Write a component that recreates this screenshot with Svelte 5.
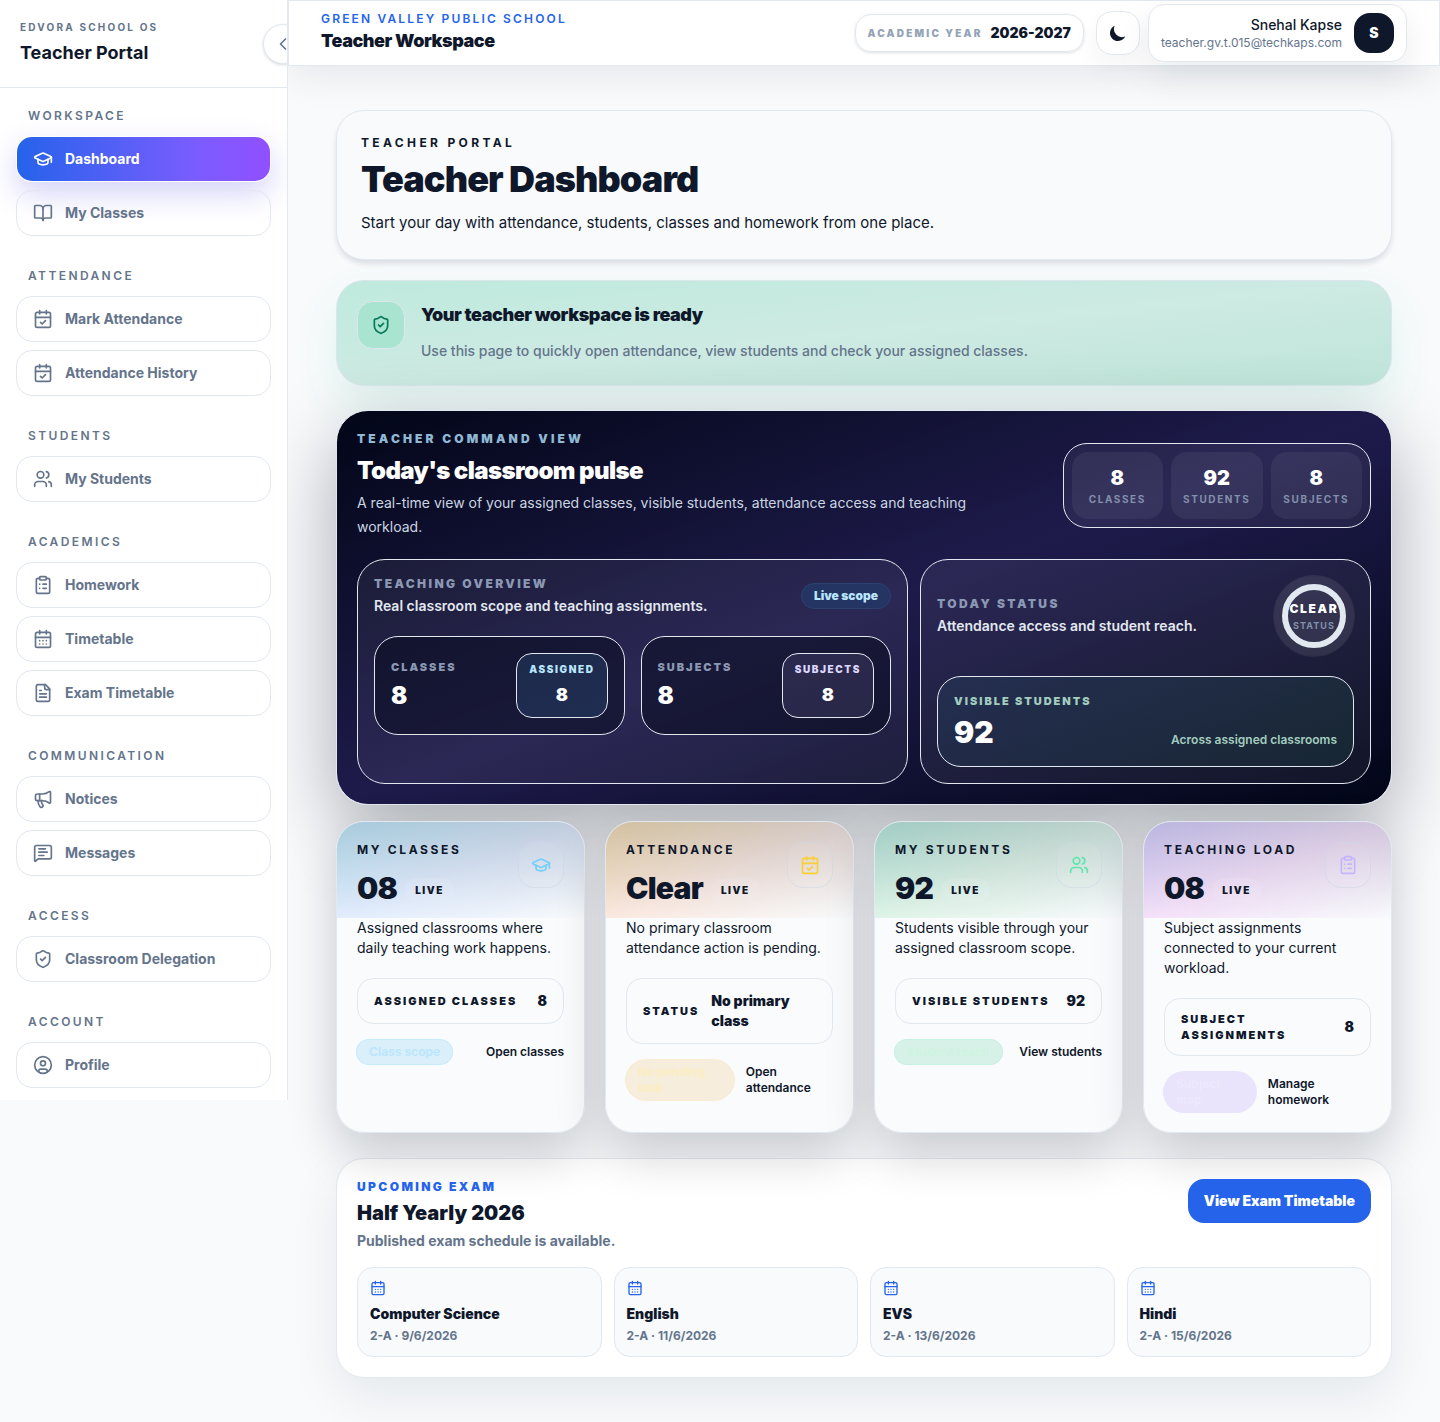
<script>
  let darkMode = false;

  const nav = [
    {
      title: 'WORKSPACE',
      items: [
        { label: 'Dashboard', icon: 'cap', active: true },
        { label: 'My Classes', icon: 'book' }
      ]
    },
    {
      title: 'ATTENDANCE',
      items: [
        { label: 'Mark Attendance', icon: 'calendarCheck' },
        { label: 'Attendance History', icon: 'calendarCheck' }
      ]
    },
    { title: 'STUDENTS', items: [{ label: 'My Students', icon: 'users' }] },
    {
      title: 'ACADEMICS',
      items: [
        { label: 'Homework', icon: 'clipboard' },
        { label: 'Timetable', icon: 'calendar' },
        { label: 'Exam Timetable', icon: 'file' }
      ]
    },
    {
      title: 'COMMUNICATION',
      items: [
        { label: 'Notices', icon: 'megaphone' },
        { label: 'Messages', icon: 'message' }
      ]
    },
    { title: 'ACCESS', items: [{ label: 'Classroom Delegation', icon: 'shield' }] },
    { title: 'ACCOUNT', items: [{ label: 'Profile', icon: 'user' }] }
  ];

  const pulse = [
    { value: '8', label: 'CLASSES' },
    { value: '92', label: 'STUDENTS' },
    { value: '8', label: 'SUBJECTS' }
  ];

  const cards = [
    {
      tone: 'sky',
      title: 'MY CLASSES',
      value: '08',
      icon: 'cap',
      text: 'Assigned classrooms where daily teaching work happens.',
      rowLabel: 'ASSIGNED CLASSES',
      rowValue: '8',
      tag: 'Class scope',
      action: 'Open classes'
    },
    {
      tone: 'amber',
      title: 'ATTENDANCE',
      value: 'Clear',
      icon: 'calendarCheck',
      text: 'No primary classroom attendance action is pending.',
      rowLabel: 'STATUS',
      rowValue: 'No primary class',
      tag: 'No pending task',
      action: 'Open attendance'
    },
    {
      tone: 'green',
      title: 'MY STUDENTS',
      value: '92',
      icon: 'users',
      text: 'Students visible through your assigned classroom scope.',
      rowLabel: 'VISIBLE STUDENTS',
      rowValue: '92',
      tag: 'Student reach',
      action: 'View students'
    },
    {
      tone: 'violet',
      title: 'TEACHING LOAD',
      value: '08',
      icon: 'clipboard',
      text: 'Subject assignments connected to your current workload.',
      rowLabel: 'SUBJECT ASSIGNMENTS',
      rowValue: '8',
      tag: 'Subject map',
      action: 'Manage homework'
    }
  ];

  const exams = [
    { subject: 'Computer Science', when: '2-A · 9/6/2026' },
    { subject: 'English', when: '2-A · 11/6/2026' },
    { subject: 'EVS', when: '2-A · 13/6/2026' },
    { subject: 'Hindi', when: '2-A · 15/6/2026' }
  ];
</script>

{#snippet icon(name, size)}
  <svg class="icon" width={size} height={size} viewBox="0 0 24 24" aria-hidden="true">
    {#if name === 'cap'}
      <path d="M21.42 10.922a1 1 0 0 0-.019-1.838L12.83 5.18a2 2 0 0 0-1.66 0L2.6 9.08a1 1 0 0 0 0 1.832l8.57 3.908a2 2 0 0 0 1.66 0z" />
      <path d="M22 10v6" />
      <path d="M6 12.5V16a6 3 0 0 0 12 0v-3.5" />
    {:else if name === 'book'}
      <path d="M12 7v14" />
      <path d="M3 18a1 1 0 0 1-1-1V4a1 1 0 0 1 1-1h5a4 4 0 0 1 4 4 4 4 0 0 1 4-4h5a1 1 0 0 1 1 1v13a1 1 0 0 1-1 1h-6a3 3 0 0 0-3 3 3 3 0 0 0-3-3z" />
    {:else if name === 'calendarCheck'}
      <path d="M8 2v4M16 2v4M3 10h18" />
      <rect width="18" height="18" x="3" y="4" rx="2" />
      <path d="m9 16 2 2 4-4" />
    {:else if name === 'calendar'}
      <path d="M8 2v4M16 2v4M3 10h18" />
      <rect width="18" height="18" x="3" y="4" rx="2" />
      <path d="M8 14h.01M12 14h.01M16 14h.01M8 18h.01M12 18h.01M16 18h.01" />
    {:else if name === 'users'}
      <path d="M16 21v-2a4 4 0 0 0-4-4H6a4 4 0 0 0-4 4v2" />
      <circle cx="9" cy="7" r="4" />
      <path d="M22 21v-2a4 4 0 0 0-3-3.87" />
      <path d="M16 3.13a4 4 0 0 1 0 7.75" />
    {:else if name === 'clipboard'}
      <rect width="8" height="4" x="8" y="2" rx="1" />
      <path d="M16 4h2a2 2 0 0 1 2 2v14a2 2 0 0 1-2 2H6a2 2 0 0 1-2-2V6a2 2 0 0 1 2-2h2" />
      <path d="M12 11h4M12 16h4M8 11h.01M8 16h.01" />
    {:else if name === 'file'}
      <path d="M15 2H6a2 2 0 0 0-2 2v16a2 2 0 0 0 2 2h12a2 2 0 0 0 2-2V7z" />
      <path d="M14 2v4a2 2 0 0 0 2 2h4" />
      <path d="M10 9H8M16 13H8M16 17H8" />
    {:else if name === 'megaphone'}
      <path d="M11 6a13 13 0 0 0 8.4-2.8A1 1 0 0 1 21 4v12a1 1 0 0 1-1.6.8A13 13 0 0 0 11 14H5a2 2 0 0 1-2-2V8a2 2 0 0 1 2-2z" />
      <path d="M6 14a12 12 0 0 0 2.4 7.2 2 2 0 0 0 3.2-2.4A8 8 0 0 1 10 14" />
      <path d="M8 6v8" />
    {:else if name === 'message'}
      <path d="M22 17a2 2 0 0 1-2 2H6.828a2 2 0 0 0-1.414.586l-2.202 2.202A.71.71 0 0 1 2 21.286V5a2 2 0 0 1 2-2h16a2 2 0 0 1 2 2z" />
      <path d="M7 11h10M7 15h6M7 7h8" />
    {:else if name === 'shield'}
      <path d="M20 13c0 5-3.5 7.5-7.66 8.95a1 1 0 0 1-.67-.01C7.5 20.5 4 18 4 13V6a1 1 0 0 1 1-1c2 0 4.5-1.2 6.24-2.72a1.17 1.17 0 0 1 1.52 0C14.51 3.81 17 5 19 5a1 1 0 0 1 1 1z" />
      <path d="m9 12 2 2 4-4" />
    {:else if name === 'user'}
      <circle cx="12" cy="12" r="10" />
      <circle cx="12" cy="10" r="3" />
      <path d="M7 20.662V19a2 2 0 0 1 2-2h6a2 2 0 0 1 2 2v1.662" />
    {:else if name === 'chevron'}
      <path d="m15 18-6-6 6-6" />
    {/if}
  </svg>
{/snippet}

<div class="app">
  <aside class="sidebar">
    <div class="brand">
      <p class="brand-label">EDVORA SCHOOL OS</p>
      <p class="brand-title">Teacher Portal</p>
      <button class="collapse" aria-label="Collapse sidebar">{@render icon('chevron', 20)}</button>
    </div>
    <nav class="nav">
      {#each nav as section}
        <div class="nav-section">
          <p class="nav-title">{section.title}</p>
          {#each section.items as item}
            <a class="nav-item" class:active={item.active} href="#top">
              {@render icon(item.icon, 20)}
              <span>{item.label}</span>
            </a>
          {/each}
        </div>
      {/each}
    </nav>
  </aside>

  <div class="main">
    <header class="topbar">
      <div>
        <p class="school">GREEN VALLEY PUBLIC SCHOOL</p>
        <p class="workspace">Teacher Workspace</p>
      </div>
      <div class="tools">
        <div class="year">
          <span class="year-label">ACADEMIC YEAR</span>
          <span class="year-value">2026-2027</span>
        </div>
        <button class="theme" aria-label="Toggle theme" on:click={() => (darkMode = !darkMode)}>
          <svg width="20" height="20" viewBox="0 0 20 20" fill="currentColor" aria-hidden="true">
            <path d="M17.293 13.293A8 8 0 0 1 6.707 2.707a8.001 8.001 0 1 0 10.586 10.586z" />
          </svg>
        </button>
        <button class="user">
          <span class="user-text">
            <span class="user-name">Snehal Kapse</span>
            <span class="user-mail">teacher.gv.t.015@techkaps.com</span>
          </span>
          <span class="avatar">S</span>
        </button>
      </div>
    </header>

    <main class="content">
      <section class="hero">
        <p class="eyebrow">TEACHER PORTAL</p>
        <h1>Teacher Dashboard</h1>
        <p class="hero-text">Start your day with attendance, students, classes and homework from one place.</p>
      </section>

      <section class="notice">
        <span class="notice-icon">{@render icon('shield', 20)}</span>
        <div>
          <h2>Your teacher workspace is ready</h2>
          <p>Use this page to quickly open attendance, view students and check your assigned classes.</p>
        </div>
      </section>

      <section class="command">
        <div class="command-head">
          <div class="command-intro">
            <p class="command-label">TEACHER COMMAND VIEW</p>
            <h2>Today's classroom pulse</h2>
            <p class="command-text">A real-time view of your assigned classes, visible students, attendance access and teaching workload.</p>
          </div>
          <div class="pulse">
            {#each pulse as stat}
              <div class="pulse-item">
                <strong>{stat.value}</strong>
                <span>{stat.label}</span>
              </div>
            {/each}
          </div>
        </div>

        <div class="command-grid">
          <div class="glass">
            <div class="glass-head">
              <div>
                <p class="glass-label">TEACHING OVERVIEW</p>
                <p class="glass-text">Real classroom scope and teaching assignments.</p>
              </div>
              <span class="scope">Live scope</span>
            </div>
            <div class="metrics">
              <div class="metric">
                <div>
                  <p class="metric-label">CLASSES</p>
                  <p class="metric-value">8</p>
                </div>
                <div class="chip chip-sky">
                  <span>ASSIGNED</span>
                  <strong>8</strong>
                </div>
              </div>
              <div class="metric">
                <div>
                  <p class="metric-label">SUBJECTS</p>
                  <p class="metric-value">8</p>
                </div>
                <div class="chip chip-violet">
                  <span>SUBJECTS</span>
                  <strong>8</strong>
                </div>
              </div>
            </div>
          </div>

          <div class="glass">
            <div class="glass-head">
              <div>
                <p class="glass-label">TODAY STATUS</p>
                <p class="glass-text">Attendance access and student reach.</p>
              </div>
              <div class="halo">
                <div class="ring">
                  <strong>CLEAR</strong>
                  <span>STATUS</span>
                </div>
              </div>
            </div>
            <div class="visible">
              <div>
                <p class="visible-label">VISIBLE STUDENTS</p>
                <p class="visible-value">92</p>
              </div>
              <p class="visible-note">Across assigned classrooms</p>
            </div>
          </div>
        </div>
      </section>

      <section class="cards">
        {#each cards as card}
          <article class="card {card.tone}">
            <div class="card-head">
              <div>
                <p class="eyebrow">{card.title}</p>
                <div class="card-figure">
                  <span class="card-value">{card.value}</span>
                  <span class="live">LIVE</span>
                </div>
              </div>
              <span class="card-icon">{@render icon(card.icon, 20)}</span>
            </div>
            <p class="card-text">{card.text}</p>
            <div class="card-row">
              <span class="row-label">{card.rowLabel}</span>
              <span class="row-value">{card.rowValue}</span>
            </div>
            <div class="card-foot">
              <span class="tag">{card.tag}</span>
              <a href="#top">{card.action}</a>
            </div>
          </article>
        {/each}
      </section>

      <section class="exam">
        <div class="exam-head">
          <div>
            <p class="exam-label">UPCOMING EXAM</p>
            <h2>Half Yearly 2026</h2>
            <p class="exam-text">Published exam schedule is available.</p>
          </div>
          <button class="exam-button">View Exam Timetable</button>
        </div>
        <div class="exam-grid">
          {#each exams as exam}
            <div class="exam-item">
              {@render icon('calendar', 16)}
              <p class="exam-subject">{exam.subject}</p>
              <p class="exam-when">{exam.when}</p>
            </div>
          {/each}
        </div>
      </section>
    </main>
  </div>
</div>

<style>
  :global(body) {
    margin: 0;
    background: #f8fafc;
    color: #0f172a;
    font-family: Inter, "Liberation Sans", sans-serif;
    font-size: 14px;
    line-height: 20px;
  }

  .app,
  .app * {
    box-sizing: border-box;
  }

  p,
  h1,
  h2 {
    margin: 0;
  }

  button {
    font: inherit;
    color: inherit;
    cursor: pointer;
  }

  a {
    color: inherit;
    text-decoration: none;
  }

  .icon {
    display: block;
    flex: none;
    fill: none;
    stroke: currentColor;
    stroke-width: 2;
    stroke-linecap: round;
    stroke-linejoin: round;
  }

  .app {
    display: flex;
    align-items: flex-start;
  }

  /* Sidebar */
  .sidebar {
    position: relative;
    flex: none;
    width: 288px;
    overflow: hidden;
    background: #fff;
    border-right: 1px solid #e2e8f0;
  }

  .brand {
    padding: 20px;
    border-bottom: 1px solid #e2e8f0;
  }

  .brand-label {
    font-size: 10px;
    line-height: 15px;
    font-weight: 700;
    letter-spacing: 0.22em;
    color: #64748b;
  }

  .brand-title {
    margin-top: 4px;
    font-size: 18px;
    line-height: 28px;
    font-weight: 700;
  }

  .collapse {
    position: absolute;
    top: 24px;
    right: -16px;
    display: flex;
    align-items: center;
    justify-content: center;
    width: 40px;
    height: 40px;
    padding: 0;
    color: #64748b;
    background: #fff;
    border: 1px solid #e2e8f0;
    border-radius: 50%;
    box-shadow: 0 1px 3px rgba(15, 23, 42, 0.16);
  }

  .nav {
    display: flex;
    flex-direction: column;
    gap: 32px;
    padding: 20px 16px 12px;
  }

  .nav-section {
    display: flex;
    flex-direction: column;
    gap: 8px;
  }

  .nav-title {
    margin-bottom: 4px;
    padding-left: 12px;
    font-size: 12px;
    line-height: 16px;
    font-weight: 600;
    letter-spacing: 0.2em;
    color: #64748b;
  }

  .nav-item {
    display: flex;
    align-items: center;
    gap: 12px;
    height: 46px;
    padding: 0 16px;
    border: 1px solid #e2e8f0;
    border-radius: 16px;
    font-weight: 700;
    color: #64748b;
  }

  .nav-item.active {
    color: #fff;
    border-color: transparent;
    background: linear-gradient(90deg, #2563eb, #7c5cff 72%, #9050ff) padding-box;
    box-shadow: 0 12px 30px rgba(79, 70, 229, 0.24);
  }

  /* Top bar */
  .main {
    flex: 1;
    min-width: 0;
    overflow: hidden;
  }

  .topbar {
    position: relative;
    z-index: 1;
    display: flex;
    align-items: center;
    justify-content: space-between;
    height: 66px;
    padding: 0 32px;
    background: #fff;
    border: 1px solid #e2e8f0;
    box-shadow: 0 12px 36px rgba(2, 6, 23, 0.07);
  }

  .school {
    font-size: 12px;
    line-height: 16px;
    font-weight: 600;
    letter-spacing: 0.18em;
    color: #2563eb;
  }

  .workspace {
    font-size: 18px;
    line-height: 28px;
    font-weight: 900;
    letter-spacing: -0.025em;
  }

  .tools {
    display: flex;
    align-items: center;
    gap: 8px;
  }

  .year {
    display: flex;
    align-items: center;
    gap: 8px;
    height: 38px;
    margin-right: 4px;
    padding: 0 12px;
    border: 1px solid #e2e8f0;
    border-radius: 16px;
    box-shadow: 0 1px 3px rgba(15, 23, 42, 0.14);
  }

  .year-label {
    font-size: 10px;
    font-weight: 900;
    letter-spacing: 0.22em;
    color: #94a3b8;
  }

  .year-value {
    font-weight: 900;
  }

  .theme {
    display: flex;
    align-items: center;
    justify-content: center;
    width: 44px;
    height: 44px;
    padding: 0;
    background: #fff;
    border: 1px solid #e2e8f0;
    border-radius: 16px;
    box-shadow: 0 12px 30px rgba(15, 23, 42, 0.05);
  }

  .user {
    display: flex;
    align-items: center;
    gap: 12px;
    height: 58px;
    padding: 0 12px;
    background: #fff;
    border: 1px solid #e2e8f0;
    border-radius: 16px;
    box-shadow: 0 14px 34px rgba(15, 23, 42, 0.08);
  }

  .user-text {
    display: flex;
    flex-direction: column;
    text-align: right;
  }

  .user-name {
    line-height: 20px;
    font-weight: 500;
  }

  .user-mail {
    font-size: 12px;
    line-height: 16px;
    color: #64748b;
  }

  .avatar {
    display: flex;
    align-items: center;
    justify-content: center;
    width: 40px;
    height: 40px;
    border-radius: 16px;
    background: #0f172a;
    color: #fff;
    font-weight: 900;
  }

  /* Page */
  .content {
    padding: 44px 48px;
  }

  .eyebrow {
    font-size: 12px;
    line-height: 16px;
    font-weight: 700;
    letter-spacing: 0.22em;
  }

  .hero {
    padding: 24px;
    background: #f8fafc;
    border: 1px solid #e2e8f0;
    border-radius: 28px;
    box-shadow: 0 4px 6px -1px rgba(15, 23, 42, 0.14);
  }

  .hero .eyebrow {
    letter-spacing: 0.28em;
  }

  .hero h1 {
    margin-top: 8px;
    font-size: 36px;
    line-height: 40px;
    font-weight: 900;
    letter-spacing: -0.025em;
  }

  .hero-text {
    margin-top: 12px;
    font-size: 15px;
    line-height: 24px;
  }

  .notice {
    display: flex;
    gap: 16px;
    margin-top: 20px;
    padding: 20px;
    background: linear-gradient(to bottom right, #bfeadd, #cdeae3 50%, #bfe5d9);
    border: 1px solid #dce6ec;
    border-radius: 28px;
    box-shadow: 0 20px 50px -6px rgba(16, 185, 129, 0.13);
  }

  .notice-icon {
    display: flex;
    flex: none;
    align-items: center;
    justify-content: center;
    width: 48px;
    height: 48px;
    color: #047857;
    background: #a8e4d0;
    border: 1px solid #dce6ec;
    border-radius: 16px;
  }

  .notice h2 {
    font-size: 18px;
    line-height: 28px;
    font-weight: 900;
    letter-spacing: -0.025em;
  }

  .notice p {
    margin-top: 8px;
    line-height: 28px;
    font-weight: 500;
    color: #64748b;
  }

  /* Command view */
  .command {
    margin-top: 24px;
    padding: 20px;
    color: #fff;
    background: linear-gradient(to bottom right, #020617, #1e1b4b 50%, #020617);
    border: 1px solid #e2e8f0;
    border-radius: 32px;
    box-shadow: 0 28px 80px rgba(2, 6, 23, 0.32);
  }

  .command-head {
    display: flex;
    align-items: center;
    justify-content: space-between;
    gap: 20px;
  }

  .command-intro {
    max-width: 672px;
  }

  .command-label {
    font-size: 12px;
    line-height: 16px;
    font-weight: 900;
    letter-spacing: 0.26em;
    color: #8fb8d4;
  }

  .command h2 {
    margin-top: 8px;
    font-size: 24px;
    line-height: 32px;
    font-weight: 900;
    letter-spacing: -0.025em;
  }

  .command-text {
    margin-top: 4px;
    line-height: 24px;
    color: #cbd5e1;
  }

  .pulse {
    display: grid;
    grid-template-columns: repeat(3, 1fr);
    gap: 8px;
    padding: 8px;
    background: rgba(255, 255, 255, 0.06);
    border: 1px solid #e2e8f0;
    border-radius: 24px;
  }

  .pulse-item {
    display: flex;
    flex-direction: column;
    align-items: center;
    padding: 12px;
    background: rgba(255, 255, 255, 0.06);
    border-radius: 16px;
  }

  .pulse-item strong {
    font-size: 20px;
    line-height: 28px;
    font-weight: 900;
  }

  .pulse-item span {
    font-size: 10px;
    line-height: 15px;
    font-weight: 700;
    letter-spacing: 0.16em;
    color: #8290ab;
  }

  .command-grid {
    display: grid;
    grid-template-columns: 11fr 9fr;
    gap: 12px;
    margin-top: 20px;
  }

  .glass {
    padding: 16px;
    background: rgba(255, 255, 255, 0.06);
    border: 1px solid #e2e8f0;
    border-radius: 28px;
  }

  .glass-head {
    display: flex;
    align-items: center;
    justify-content: space-between;
    gap: 12px;
  }

  .glass-label {
    font-size: 12px;
    line-height: 16px;
    font-weight: 900;
    letter-spacing: 0.2em;
    color: #8b98b3;
  }

  .glass-text {
    margin-top: 4px;
    font-weight: 600;
    color: #e2e8f0;
  }

  .scope {
    padding: 4px 12px;
    font-size: 12px;
    line-height: 16px;
    font-weight: 900;
    color: #bae6fd;
    background: #243463;
    border: 1px solid #2b4270;
    border-radius: 13px;
  }

  .metrics {
    display: grid;
    grid-template-columns: 1fr 1fr;
    gap: 16px;
    margin-top: 20px;
  }

  .metric {
    display: flex;
    align-items: center;
    justify-content: space-between;
    padding: 16px;
    background: rgba(2, 6, 23, 0.45);
    border: 1px solid #e2e8f0;
    border-radius: 24px;
  }

  .metric-label,
  .visible-label {
    font-size: 11px;
    line-height: 17px;
    font-weight: 900;
    letter-spacing: 0.18em;
    color: #8b98b3;
  }

  .metric-value {
    margin-top: 4px;
    font-size: 24px;
    line-height: 32px;
    font-weight: 900;
  }

  .chip {
    display: flex;
    flex-direction: column;
    align-items: center;
    gap: 4px;
    padding: 8px 12px;
    border: 1px solid #e2e8f0;
    border-radius: 16px;
  }

  .chip span {
    font-size: 10px;
    line-height: 15px;
    font-weight: 900;
    letter-spacing: 0.16em;
  }

  .chip strong {
    font-size: 18px;
    line-height: 28px;
    font-weight: 900;
  }

  .chip-sky {
    background: rgba(80, 170, 230, 0.14);
  }

  .chip-sky span {
    color: #bae6fd;
  }

  .chip-violet {
    background: rgba(180, 160, 235, 0.13);
  }

  .chip-violet span {
    color: #ddd6fe;
  }

  .halo {
    display: flex;
    flex: none;
    align-items: center;
    justify-content: center;
    width: 80px;
    height: 80px;
    border-radius: 50%;
    background: rgba(255, 255, 255, 0.09);
    box-shadow: 0 0 0 1px rgba(255, 255, 255, 0.08);
  }

  .ring {
    display: flex;
    flex-direction: column;
    align-items: center;
    justify-content: center;
    width: 64px;
    height: 64px;
    border: 6px solid #e2e8f0;
    border-radius: 50%;
  }

  .ring strong {
    font-size: 12px;
    line-height: 20px;
    font-weight: 900;
    letter-spacing: 0.14em;
  }

  .ring span {
    font-size: 9px;
    line-height: 14px;
    font-weight: 700;
    letter-spacing: 0.12em;
    color: #8290ab;
  }

  .visible {
    display: flex;
    align-items: flex-end;
    justify-content: space-between;
    margin-top: 20px;
    padding: 16px;
    background: linear-gradient(to right, rgba(45, 130, 140, 0.12), rgba(52, 190, 130, 0.09));
    border: 1px solid #e2e8f0;
    border-radius: 24px;
  }

  .visible-label {
    color: #a3cdbf;
  }

  .visible-value {
    margin-top: 4px;
    font-size: 30px;
    line-height: 36px;
    font-weight: 900;
  }

  .visible-note {
    font-size: 12px;
    line-height: 20px;
    font-weight: 600;
    color: #a3cdbf;
  }

  /* Summary cards */
  .cards {
    display: grid;
    grid-template-columns: repeat(4, 1fr);
    gap: 20px;
    margin-top: 16px;
  }

  .card {
    padding: 20px;
    background-color: rgba(249, 251, 253, 0.94);
    background-repeat: no-repeat;
    background-size: 100% 96px;
    border: 1px solid #e2e8f0;
    border-radius: 28px;
    box-shadow: 0 20px 50px rgba(2, 12, 23, 0.2);
  }

  .sky {
    --tone: #74cffb;
    --tag-bg: #daeffa;
    --tag-line: #c4eafb;
    --tag-text: #bae6fd;
    background-image: linear-gradient(rgba(71, 85, 105, 0.22), transparent),
      linear-gradient(to bottom right, #c2edfd, #e2edfe 50%, #f8fafc);
  }

  .amber {
    --tone: #fbce37;
    --tag-bg: #f7eddc;
    --tag-line: #f9ecd0;
    --tag-text: #fbeec0;
    background-image: linear-gradient(rgba(71, 85, 105, 0.22), transparent),
      linear-gradient(to bottom right, #f9dfb0, #fbe9e0 50%, #f8fafc);
  }

  .green {
    --tone: #5fe6b0;
    --tag-bg: #d8f1e8;
    --tag-line: #c6f0df;
    --tag-text: #cdf4e0;
    background-image: linear-gradient(rgba(71, 85, 105, 0.22), transparent),
      linear-gradient(to bottom right, #bbeedd, #dff4e8 50%, #f8fafc);
  }

  .violet {
    --tone: #c4b5fd;
    --tag-bg: #e9e3fc;
    --tag-line: #e9e3fc;
    --tag-text: #eee8fd;
    background-image: linear-gradient(rgba(71, 85, 105, 0.2), transparent),
      linear-gradient(to bottom right, #d8cefd, #f4e1f9 50%, #f8fafc);
  }

  .card-head {
    display: flex;
    align-items: flex-start;
    justify-content: space-between;
  }

  .card-figure {
    display: flex;
    align-items: flex-end;
    gap: 8px;
    margin-top: 12px;
  }

  .card-value {
    font-size: 30px;
    line-height: 36px;
    font-weight: 900;
    letter-spacing: -0.025em;
  }

  .live {
    margin-bottom: 4px;
    padding: 4px 10px;
    font-size: 10px;
    line-height: 16px;
    font-weight: 900;
    letter-spacing: 0.15em;
    background: rgba(248, 250, 252, 0.12);
    border-radius: 12px;
  }

  .card-icon {
    display: flex;
    flex: none;
    align-items: center;
    justify-content: center;
    width: 46px;
    height: 46px;
    color: var(--tone);
    background: rgba(255, 255, 255, 0.06);
    border: 1px solid rgba(203, 213, 225, 0.5);
    border-radius: 16px;
  }

  .card-text {
    margin-top: 12px;
  }

  .card-row {
    display: flex;
    align-items: center;
    justify-content: space-between;
    gap: 12px;
    margin-top: 20px;
    padding: 12px 16px;
    border: 1px solid #e2e8f0;
    border-radius: 16px;
  }

  .row-label {
    font-size: 11px;
    line-height: 16px;
    font-weight: 900;
    letter-spacing: 0.18em;
  }

  .row-value {
    font-weight: 900;
  }

  .card-foot {
    display: flex;
    align-items: center;
    justify-content: space-between;
    gap: 12px;
    margin-top: 16px;
    font-size: 12px;
    line-height: 16px;
    font-weight: 600;
  }

  .tag {
    padding: 4px 12px;
    color: var(--tag-text);
    background: var(--tag-bg);
    border-radius: 20px;
    box-shadow: 0 0 0 1px var(--tag-line);
    font-weight: 700;
  }

  /* Upcoming exam */
  .exam {
    margin-top: 25px;
    padding: 20px;
    background: #fff;
    border: 1px solid #e2e8f0;
    border-radius: 28px;
    box-shadow: 0 18px 50px rgba(15, 23, 42, 0.08);
  }

  .exam-head {
    display: flex;
    align-items: flex-start;
    justify-content: space-between;
  }

  .exam-label {
    font-size: 12px;
    line-height: 16px;
    font-weight: 900;
    letter-spacing: 0.2em;
    color: #2563eb;
  }

  .exam h2 {
    margin-top: 4px;
    font-size: 20px;
    line-height: 28px;
    font-weight: 900;
  }

  .exam-text {
    margin-top: 4px;
    font-weight: 700;
    color: #64748b;
  }

  .exam-button {
    height: 44px;
    padding: 0 16px;
    font-weight: 900;
    color: #fff;
    background: #2563eb;
    border: none;
    border-radius: 16px;
  }

  .exam-grid {
    display: grid;
    grid-template-columns: repeat(4, 1fr);
    gap: 12px;
    margin-top: 16px;
  }

  .exam-item {
    padding: 12px;
    background: #f8fafc;
    border: 1px solid #e2e8f0;
    border-radius: 16px;
  }

  .exam-item :global(.icon) {
    color: #2563eb;
  }

  .exam-subject {
    margin-top: 8px;
    font-weight: 900;
  }

  .exam-when {
    margin-top: 4px;
    font-size: 12px;
    line-height: 16px;
    font-weight: 700;
    color: #64748b;
  }
</style>
